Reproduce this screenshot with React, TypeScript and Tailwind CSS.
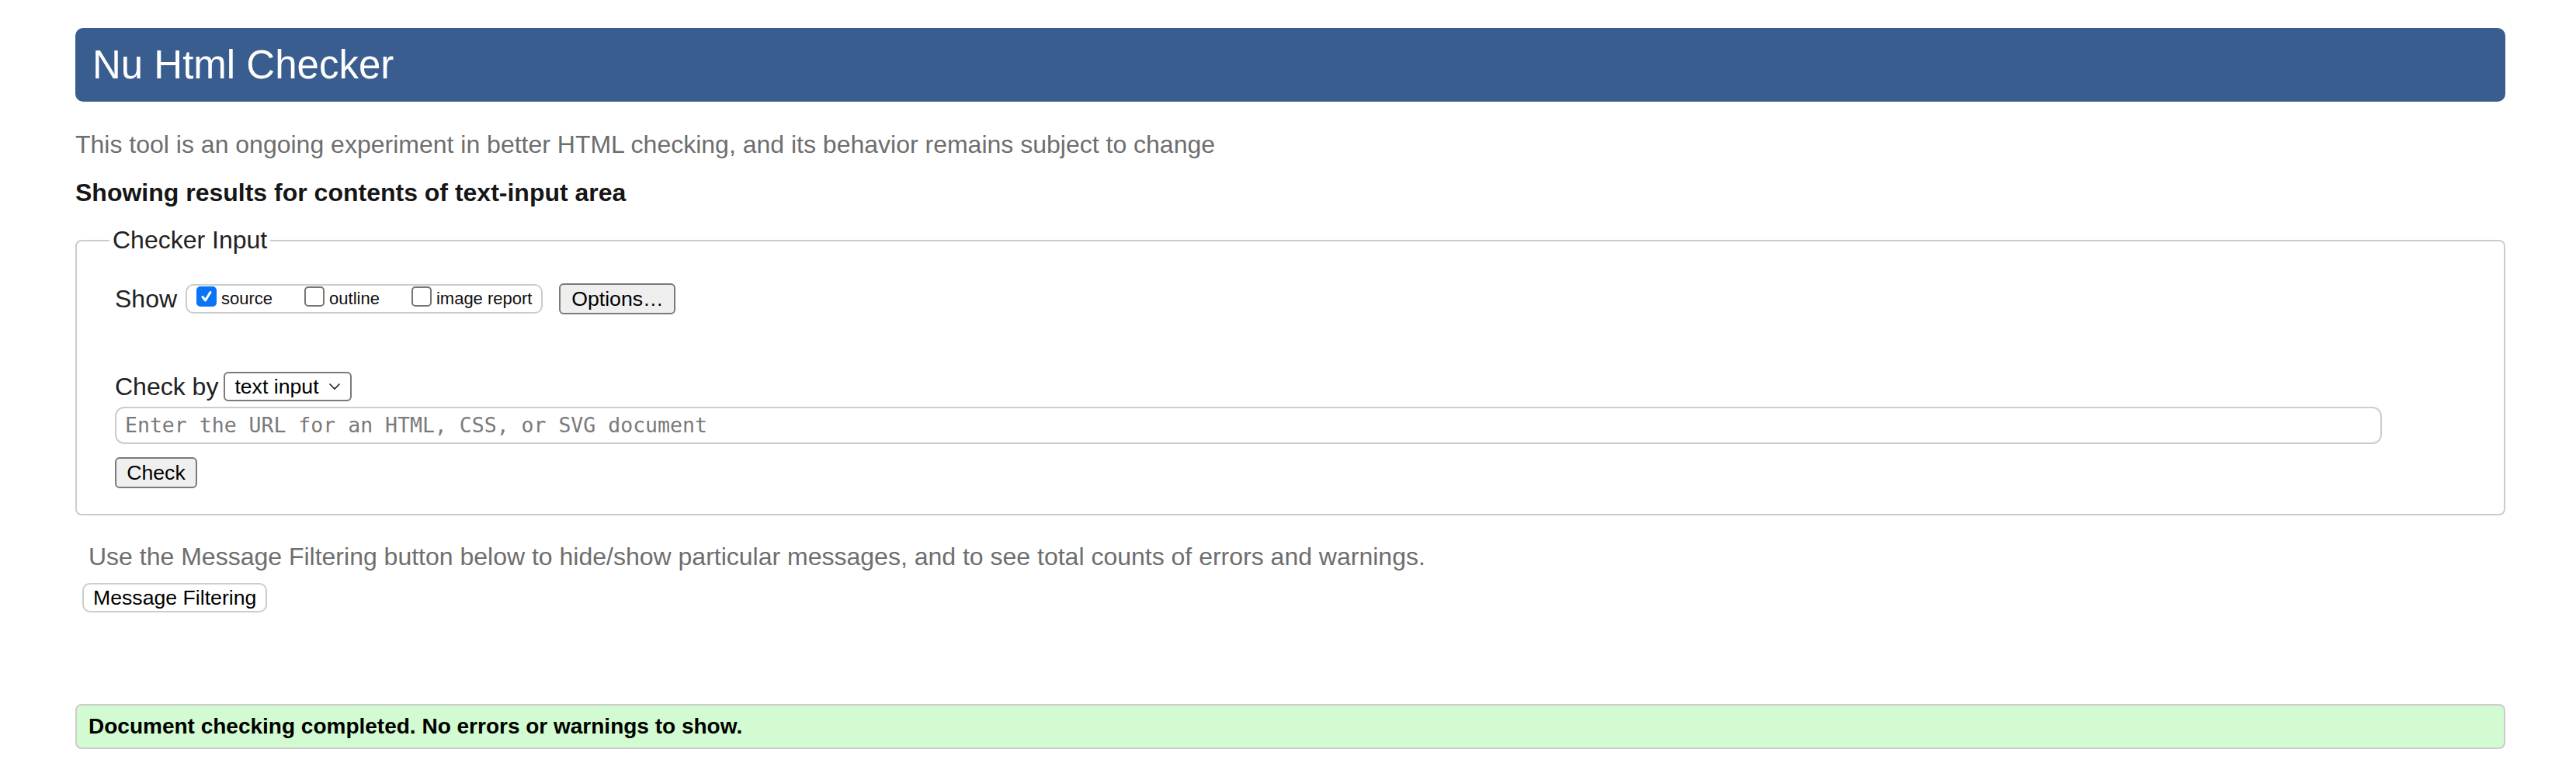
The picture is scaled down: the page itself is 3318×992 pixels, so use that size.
import React from 'react';

const sans = "font-['Liberation_Sans',Arial,sans-serif]";

function Box({ checked, label }: { checked?: boolean; label: string }) {
  return (
    <label className="flex items-center gap-[6px]">
      {checked ? (
        <span className="mb-[6px] flex h-[26px] w-[26px] items-center justify-center rounded-[5px] bg-[#0a74f6]">
          <svg width="18" height="18" viewBox="0 0 18 18" fill="none">
            <path d="M4 9.5 L7.5 14 L14 3.5" stroke="#fff" strokeWidth="3" strokeLinecap="round" strokeLinejoin="round" />
          </svg>
        </span>
      ) : (
        <span className="mb-[6px] h-[26px] w-[26px] rounded-[5px] border-2 border-[#767676] bg-white" />
      )}
      <span className="text-[22px] leading-[26px] text-[#111]">{label}</span>
    </label>
  );
}

export default function App() {
  return (
    <div className={`${sans} min-h-[992px] bg-white pl-[97px] pr-[91px] pt-[36px] text-[#222]`}>
      {/* Header */}
      <div className="flex h-[95px] items-center rounded-[10px] bg-[#3a5d8f] pl-[22px]">
        <h1 className="text-[51px] leading-none text-white">Nu Html Checker</h1>
      </div>

      <p className="mt-[37px] text-[32px] leading-[37px] text-[#6e6e6e]">
        This tool is an ongoing experiment in better HTML checking, and its behavior remains subject to change
      </p>
      <p className="mt-[25px] text-[32px] font-bold leading-[37px] text-[#161616]">
        Showing results for contents of text-input area
      </p>

      {/* Checker input */}
      <fieldset className="mt-[24px] rounded-[8px] border-2 border-[#cccccc] pb-[33px] pl-[42px] pr-[40px]">
        <legend className="px-[4px] text-[32px] leading-[37px] text-[#222]">Checker Input</legend>
        <div className="pl-[7px]">
          <div className="mt-[37px] flex items-center">
            <span className="text-[32px] leading-[37px]">Show</span>
            <div className="ml-[11px] flex h-[38px] items-center gap-[41px] rounded-[10px] border-2 border-[#cccccc] px-[12px]">
              <Box checked label="source" />
              <Box label="outline" />
              <Box label="image report" />
            </div>
            <button className="ml-[21px] h-[40px] w-[150px] rounded-[6px] border-2 border-[#7a7a7a] bg-[#efefef] text-[26.67px] leading-none text-black">
              Options…
            </button>
          </div>

          <div className="mt-[74px] flex items-center">
            <span className="text-[32px] leading-[37px]">Check by</span>
            <div className="ml-[7px] flex h-[38px] w-[165px] items-center justify-between rounded-[6px] border-2 border-[#7a7a7a] bg-white pl-[12px] pr-[12px]">
              <span className="text-[26.67px] leading-none text-black">text input</span>
              <svg width="16" height="10" viewBox="0 0 16 10" fill="none">
                <path d="M1.5 1.5 L8 8 L14.5 1.5" stroke="#222" strokeWidth="1.6" />
              </svg>
            </div>
          </div>

          <div className="mt-[7px] flex h-[48px] w-[2920px] items-center rounded-[12px] border-2 border-[#cccccc] pl-[11px]">
            <span className="font-['DejaVu_Sans_Mono',monospace] text-[26.5px] leading-none text-[#7a7a7a]">
              Enter the URL for an HTML, CSS, or SVG document
            </span>
          </div>

          <button className="mt-[17px] h-[40px] w-[106px] rounded-[6px] border-2 border-[#7a7a7a] bg-[#efefef] text-[26.67px] leading-none text-black">
            Check
          </button>
        </div>
      </fieldset>

      <p className="mt-[35px] pl-[17px] text-[32px] leading-[37px] text-[#6e6e6e]">
        Use the Message Filtering button below to hide/show particular messages, and to see total counts of errors and warnings.
      </p>
      <button className="ml-[9px] mt-[15px] h-[38px] rounded-[10px] border-2 border-[#cccccc] bg-white px-[12px] text-[26.67px] leading-none text-black">
        Message Filtering
      </button>

      <div className="mt-[118px] flex h-[58px] items-center rounded-[8px] border-2 border-[#cccccc] bg-[#d3fbd1] pl-[15px]">
        <span className="text-[28px] font-bold leading-none text-black">
          Document checking completed. No errors or warnings to show.
        </span>
      </div>

      <p className="mt-[26px] pl-[4px] text-[32px] font-bold leading-[37px] text-[#222]">Source</p>
    </div>
  );
}
